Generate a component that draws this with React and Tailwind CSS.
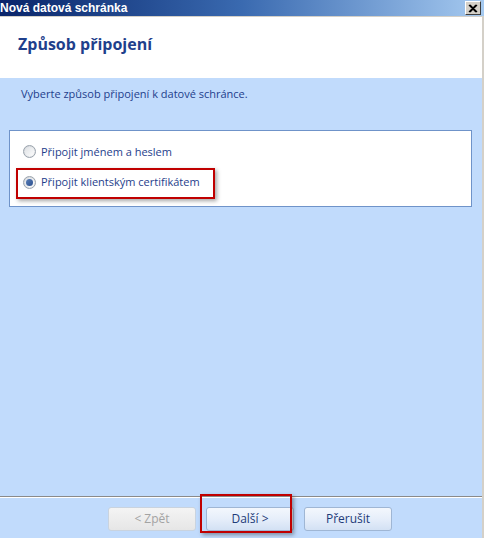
import React from "react";

const Radio = ({ checked }) => (
    <span className="w-[13px] h-[13px] rounded-full border border-[#9aa3ad] bg-gradient-to-br from-[#dcdfe3] to-[#ffffff] flex items-center justify-center shadow-[inset_0_0_1px_#b0b5bb]">
        {checked && <span className="w-[7px] h-[7px] rounded-full bg-gradient-to-br from-[#5a7fb8] to-[#2b4f8e]" />}
    </span>
);

const WizButton = ({ children, disabled }) => (
    <button
        className={`w-[88px] h-[24px] rounded-[3px] border text-[12px] flex items-center justify-center ${
            disabled
                ? "border-[#c9d3df] bg-gradient-to-b from-[#f4f4f4] to-[#e6e6e6] text-[#a3a3a3]"
                : "border-[#9fb6d4] bg-gradient-to-b from-[#f3f7fd] via-[#e6eefa] to-[#d3e1f4] text-[#1e3b78]"
        }`}
    >
        {children}
    </button>
);

export default function App() {
    return (
        <div className="w-[484px] h-[538px] flex flex-col bg-[#c1dbfc] overflow-hidden" style={{ fontFamily: '"Open Sans", "Noto Sans", sans-serif' }}>
            <div className="h-[16px] flex items-center justify-between bg-gradient-to-r from-[#0a246a] via-[#3a6ab0] to-[#a6caf0] pr-[3px]">
                <span className="text-white font-bold text-[12px] leading-none" style={{ fontFamily: '"Liberation Sans", Arial, sans-serif' }}>
                    Nová datová schránka
                </span>
                <span className="w-[16px] h-[14px] bg-[#d4d0c8] border border-t-white border-l-white border-r-[#404040] border-b-[#404040] flex items-center justify-center">
                    <svg width="10" height="9" viewBox="0 0 10 9">
                        <path d="M1 1 L8 8 M8 1 L1 8 M2 1 L9 8 M9 1 L2 8" stroke="#000" strokeWidth="1.3" />
                    </svg>
                </span>
            </div>
            <div className="flex-1 flex">
                <div className="flex-1 flex flex-col">
                    <div className="h-[1px] bg-[#d4d0c8]" />
                    <div className="h-[61px] bg-white flex items-center pl-[18px]">
                        <span className="text-[16px] font-bold text-[#1f3f8c] pb-[8px]">Způsob připojení</span>
                    </div>
                    <div className="flex-1 flex flex-col">
                        <div className="pl-[21px] pt-[8px] text-[11px] text-[#1e3e8c]">
                            Vyberte způsob připojení k datové schránce.
                        </div>
                        <div className="relative ml-[9px] mt-[27px] w-[463px] h-[77px] bg-white border border-[#6f93c9] flex flex-col pl-[13px] pt-[13px] gap-[14px]">
                            <div className="flex items-center gap-[5px] text-[11px] text-[#1e3e8c]">
                                <Radio />
                                <span>Připojit jménem a heslem</span>
                            </div>
                            <div className="flex items-center gap-[5px] text-[11px] text-[#1e3e8c]">
                                <Radio checked />
                                <span>Připojit klientským certifikátem</span>
                            </div>
                            <div className="absolute left-[6px] top-[37px] w-[199px] h-[31px] border-2 border-[#c00000] shadow-[2px_2px_4px_rgba(0,0,0,0.35)]" />
                        </div>
                        <div className="flex-1" />
                        <div className="h-[1px] bg-[#8a8a8a]" />
                        <div className="h-[1px] bg-white" />
                        <div className="h-[40px] flex items-start pt-[9px] pl-[108px] gap-[10px] relative">
                            <WizButton disabled>&lt; Zpět</WizButton>
                            <WizButton>Další &gt;</WizButton>
                            <WizButton>Přerušit</WizButton>
                            <div className="absolute left-[200px] top-[-4px] w-[92px] h-[39px] border-2 border-[#c00000] shadow-[2px_2px_4px_rgba(0,0,0,0.35)]" />
                        </div>
                    </div>
                </div>
                <div className="w-[2px] bg-[#d4d0c8]" />
            </div>
        </div>
    );
}
